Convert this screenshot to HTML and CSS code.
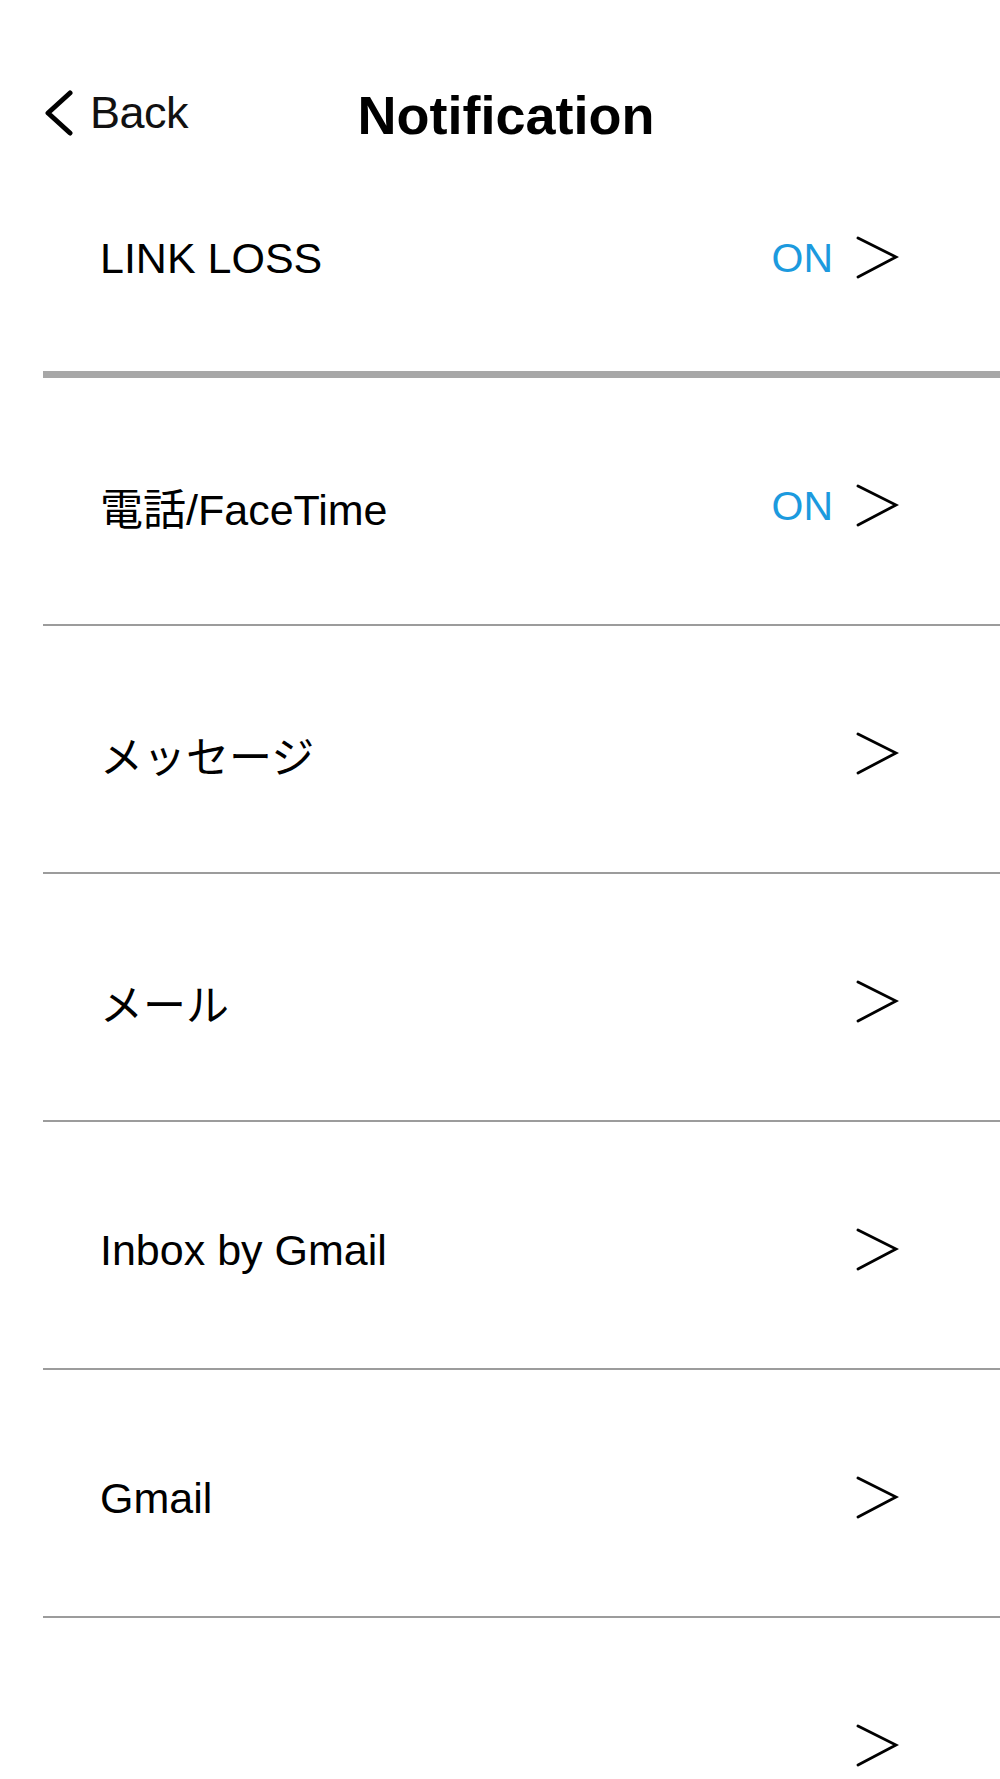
FILE: index.html
```html
<!DOCTYPE html>
<html lang="ja">
<head>
<meta charset="utf-8">
<title>Notification</title>
<link rel="stylesheet" href="styles.css">
</head>
<body>
<div class="screen">
  <header class="nav">
    <a class="back">
      <svg class="back-icon" viewBox="0 0 30 46" width="30" height="46"><polyline points="26,3 4,23 26,43" fill="none" stroke="#000" stroke-width="5" stroke-linecap="round" stroke-linejoin="round"/></svg>
      <span class="back-label">Back</span>
    </a>
    <h1 class="title">Notification</h1>
    <span class="nav-spacer"></span>
  </header>
  <ul class="list">
    <li class="row row-thick"><span class="label">LINK LOSS</span><span class="status">ON</span><svg class="chev" viewBox="0 0 44 44" width="44" height="44"><polyline points="3,2 41,21 3,41" fill="none" stroke="#000" stroke-width="2.8" stroke-linecap="round"/></svg></li>
    <li class="row"><span class="label">電話/FaceTime</span><span class="status">ON</span><svg class="chev" viewBox="0 0 44 44" width="44" height="44"><polyline points="3,2 41,21 3,41" fill="none" stroke="#000" stroke-width="2.8" stroke-linecap="round"/></svg></li>
    <li class="row"><span class="label">メッセージ</span><svg class="chev" viewBox="0 0 44 44" width="44" height="44"><polyline points="3,2 41,21 3,41" fill="none" stroke="#000" stroke-width="2.8" stroke-linecap="round"/></svg></li>
    <li class="row"><span class="label">メール</span><svg class="chev" viewBox="0 0 44 44" width="44" height="44"><polyline points="3,2 41,21 3,41" fill="none" stroke="#000" stroke-width="2.8" stroke-linecap="round"/></svg></li>
    <li class="row"><span class="label">Inbox by Gmail</span><svg class="chev" viewBox="0 0 44 44" width="44" height="44"><polyline points="3,2 41,21 3,41" fill="none" stroke="#000" stroke-width="2.8" stroke-linecap="round"/></svg></li>
    <li class="row"><span class="label">Gmail</span><svg class="chev" viewBox="0 0 44 44" width="44" height="44"><polyline points="3,2 41,21 3,41" fill="none" stroke="#000" stroke-width="2.8" stroke-linecap="round"/></svg></li>
    <li class="row"><span class="label"></span><svg class="chev" viewBox="0 0 44 44" width="44" height="44"><polyline points="3,2 41,21 3,41" fill="none" stroke="#000" stroke-width="2.8" stroke-linecap="round"/></svg></li>
  </ul>
</div>
</body>
</html>
```
FILE: styles.css
```css
html, body {
  margin: 0;
  padding: 0;
  background: #fff;
}
body {
  font-family: "Liberation Sans", "Noto Sans CJK JP", sans-serif;
  color: #000;
  overflow: hidden;
}
.screen {
  width: 1000px;
  height: 1779px;
  overflow: hidden;
}
.nav {
  height: 135px;
  padding-top: 82px;
  padding-bottom: 8px;
  box-sizing: border-box;
  display: grid;
  grid-template-columns: 1fr auto 1fr;
  align-items: center;
}
.back {
  display: flex;
  align-items: center;
  gap: 16px;
  padding-left: 44px;
}
.back-icon {
  display: block;
  margin-top: 0;
}
.back-label {
  font-size: 45px;
  letter-spacing: -0.5px;
  color: #111;
}
.title {
  margin: 0;
  padding-left: 12px;
  font-size: 54px;
  font-weight: 700;
  color: #000;
  position: relative;
  top: 2px;
}
.list {
  list-style: none;
  margin: 0 0 0 43px;
  padding: 0;
}
.row {
  height: 236px;
  display: flex;
  align-items: center;
  padding: 10px 101px 0 57px;
  border-bottom: 2px solid #9c9c9c;
}
.row-thick {
  height: 226px;
  border-bottom: 7px solid #a7a7a7;
}
.label {
  flex: 1;
  font-size: 43px;
}
.status {
  font-size: 41px;
  color: #1c9ade;
  margin-right: 22px;
}
.chev {
  display: block;
  flex: none;
}
```
